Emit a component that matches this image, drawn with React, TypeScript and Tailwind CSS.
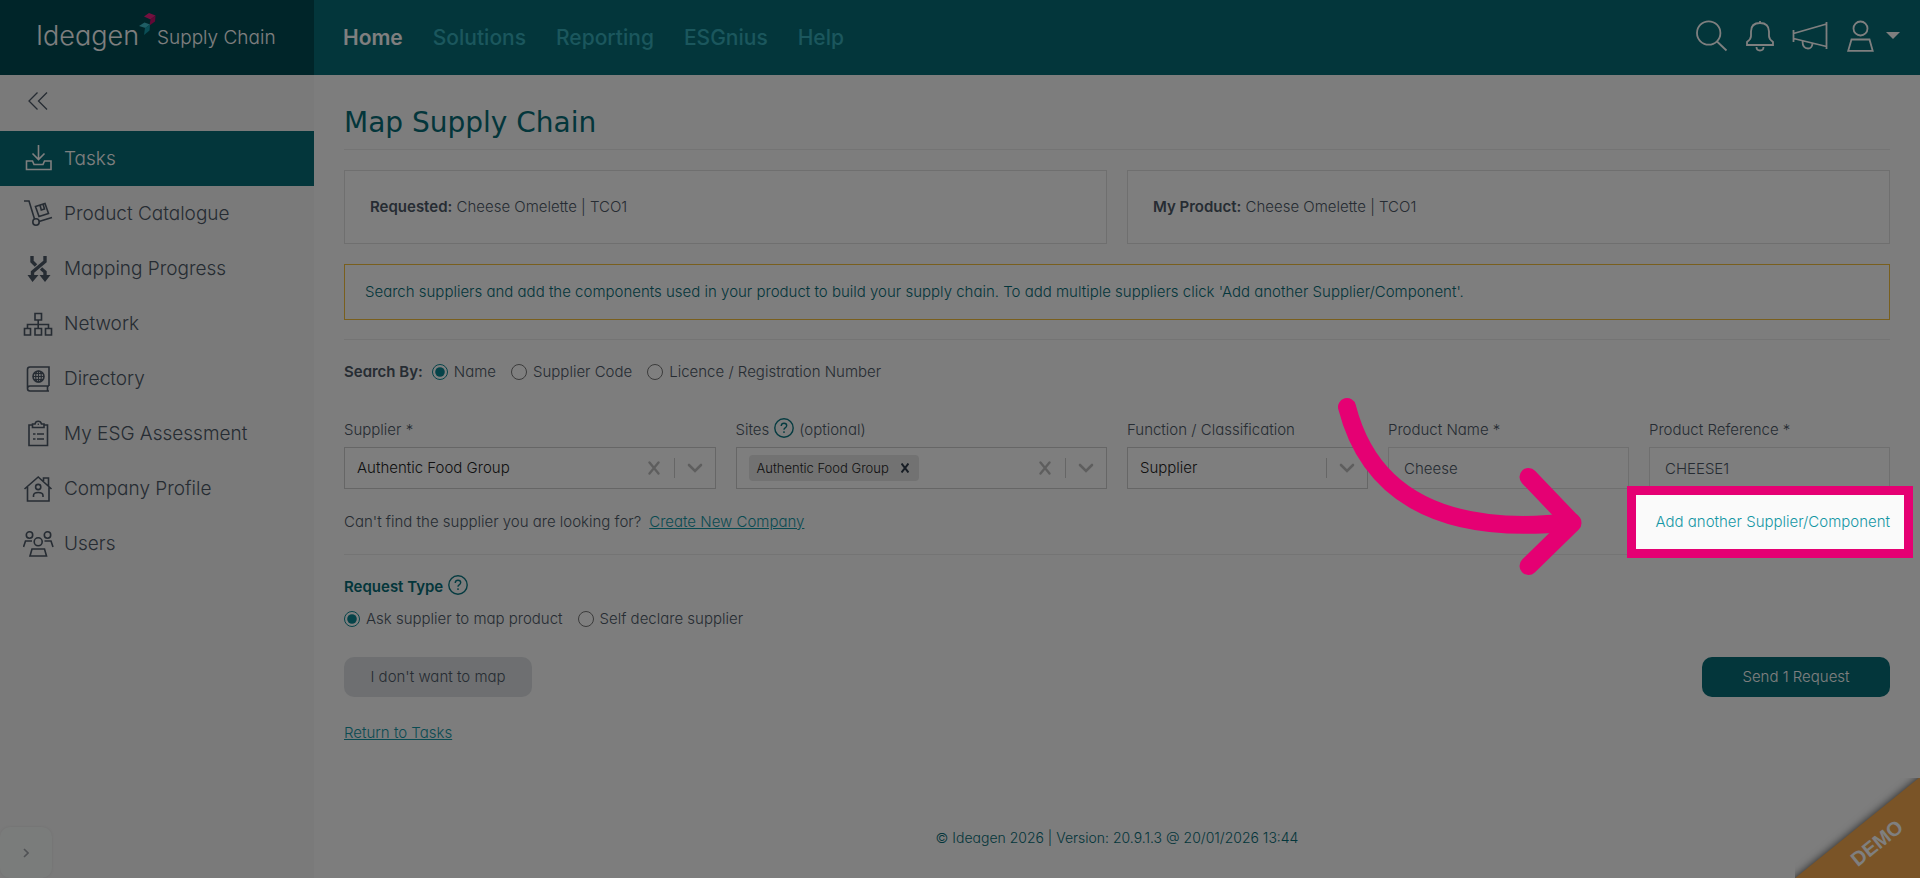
import { useState } from 'react'
import type { ReactNode } from 'react'

const svgProps = { fill: 'none', stroke: 'currentColor', strokeWidth: 1.6 }

const menuItems: { label: string; active?: boolean; icon: ReactNode }[] = [
  {
    label: 'Tasks',
    active: true,
    icon: <path d="M15.500 0v14M9.500 8.500l6 6 6-6M3.500 16H9.500l1.500 3.500h9l1.500-3.500h6.500v8.500h-24.500z" />,
  },
  {
    label: 'Product Catalogue',
    icon: (
      <>
        <path d="M1 1h5l5.500 18M16 21.500 29 17.500M12.500 6.500l9.500-3 3.500 10-9.500 3zM17 5l1.300 5 3.200-1-1.500-5" />
        <circle cx="13" cy="22" r="3.200" />
      </>
    ),
  },
  {
    label: 'Mapping Progress',
    icon: (
      <>
        <path strokeWidth={3.4} d="M9 1v5.500l4 4M22 1v5.500L9.500 17v4M18 13.500l4 3.500v4" />
        <path fill="currentColor" stroke="none" d="M4.500 20h11l-6 7zM16.500 20h11l-5.500 7z" />
      </>
    ),
  },
  {
    label: 'Network',
    icon: <path d="M12 3.500h6.500V10H12zM1.500 18.500h6V25h-6zM12 18.500h6.500V25H12zM22.500 18.500h6V25h-6zM15.200 10v8.500M4.500 18.500v-4h21v4" />,
  },
  {
    label: 'Directory',
    icon: (
      <>
        <path d="M26 21V2H7Q4.500 2 4.500 4.500v19Q4.500 26 7 26h19M4.500 23.500Q4.500 21 7 21h19M24.500 21v5" />
        <circle cx="15.500" cy="11.500" r="5.500" />
        <path strokeWidth={1.2} d="M10 11.500h11M15.500 6v11M11 8.500h9M11 14.500h9" />
        <ellipse strokeWidth={1.2} cx="15.500" cy="11.500" rx="2.800" ry="5.500" />
      </>
    ),
  },
  {
    label: 'My ESG Assessment',
    icon: (
      <>
        <path d="M9.500 5H6v20.500h18.500V5H21" />
        <path d="M9.500 4h2.500q.500-2.800 3.200-2.800T18.500 4H21v3.500H9.500z" />
        <path d="M10 14h2.500M14 14h7M10 19h2.500M14 19h7M14.700 4.200h1.200" />
      </>
    ),
  },
  {
    label: 'Company Profile',
    icon: (
      <>
        <path d="M1.500 14 15.200 2 28.500 14M4.500 12v14h21.500V12M20.500 6V3h5v8M10.500 22v-1.500q0-3 4.700-3t4.800 3V22" />
        <circle cx="15.200" cy="12" r="2.600" />
      </>
    ),
  },
  {
    label: 'Users',
    icon: (
      <>
        <circle cx="6.500" cy="5" r="3.200" />
        <circle cx="24.500" cy="5" r="3.200" />
        <circle cx="15.200" cy="11.800" r="4" />
        <path d="M9 19h12.500l2 7H7zM.500 17l2-6H9M30 17l-2-6h-6.500" />
      </>
    ),
  },
]

function Sidebar() {
  return (
    <aside className="w-[314px] shrink-0 bg-[#f4f4f4]">
      <button aria-label="Collapse menu" className="flex h-14 items-center pb-1 pl-7 text-[#4c5866]">
        <svg width="20" height="18" viewBox="0 0 20 18" {...svgProps} strokeWidth={1.3}>
          <path d="M9.500.500 1 9l8.500 8.500M19 .500 10.500 9l8.500 8.500" />
        </svg>
      </button>
      <nav>
        {menuItems.map((item) => (
          <a
            key={item.label}
            href="#"
            className={
              item.active
                ? 'flex h-[55px] items-center gap-2.5 bg-[#066c76] pl-[23px] text-[19px] font-light text-white'
                : 'flex h-[55px] items-center gap-2.5 pl-[23px] text-[19px] font-light text-[#4c5866]'
            }
          >
            <svg width="31" height="28" viewBox="0 0 31 28" {...svgProps}>
              {item.icon}
            </svg>
            {item.label}
          </a>
        ))}
      </nav>
    </aside>
  )
}

function Logo() {
  return (
    <a href="#" className="flex h-full w-[314px] shrink-0 items-center bg-[#004b53] pb-1 pl-9 text-white">
      <span className="text-[27px]">Ideagen</span>
      <svg width="18" height="26" viewBox="0 0 18 26" className="mb-5">
        <path fill="#e6217e" d="M5 3.500 10 0l6.500 2.500-5 4z" />
        <path fill="#c4106a" d="m16.500 2.500-.500 6-5.500 4 1-6z" />
        <path fill="#3fbccb" d="m0 13 5.500-3.500 5.500 2L6.500 15z" />
        <path fill="#149aaa" d="m11 11.500-.500 6-5.500 4.500 1-7z" />
      </svg>
      <span className="pt-1 text-[19px] font-light">Supply Chain</span>
    </a>
  )
}

function Header() {
  return (
    <header className="flex h-[75px] items-center bg-[#066c76]">
      <Logo />
      <nav className="flex gap-[30px] pl-[29px] text-[21px] font-medium text-[#36aebb]">
        <a href="#" className="font-semibold text-white">Home</a>
        <a href="#">Solutions</a>
        <a href="#">Reporting</a>
        <a href="#">ESGnius</a>
        <a href="#">Help</a>
      </nav>
      <div className="ml-auto flex gap-[18px] pr-5 pb-1 text-white">
        <button aria-label="Search">
          <svg width="32" height="32" viewBox="0 0 32 32" {...svgProps} strokeWidth={1.8}>
            <circle cx="12.700" cy="13" r="11.700" />
            <path d="m21 21.500 9.500 9" />
          </svg>
        </button>
        <button aria-label="Notifications">
          <svg width="28" height="32" viewBox="0 0 28 32" {...svgProps} strokeWidth={1.8}>
            <path d="M1 25v-3q4-3 4-6v-4.500q0-8.500 9-8.500t9 8.500V16q0 3 4 6v3zM14 1v2M10.500 27q0 3.500 3.500 3.500t3.500-3.500" />
          </svg>
        </button>
        <button aria-label="Announcements">
          <svg width="36" height="32" viewBox="0 0 36 32" {...svgProps} strokeWidth={1.8}>
            <path d="M1.500 10v12M34.500 2v27M1.500 13.500 34.500 4M1.500 18.500l33 8M10.500 21q0 7.500 5.500 7.500 4 0 4.500-5" />
          </svg>
        </button>
        <button aria-label="Account" className="flex items-center gap-3">
          <svg width="28" height="32" viewBox="0 0 28 32" {...svgProps} strokeWidth={1.8}>
            <circle cx="14.500" cy="8.500" r="7" />
            <path d="M5.500 19.500h18l3.200 11.300H2.200z" />
          </svg>
          <svg width="14" height="7" viewBox="0 0 14 7">
            <path fill="currentColor" d="M0 0h14L7 7z" />
          </svg>
        </button>
      </div>
    </header>
  )
}

function HelpIcon({ label }: { label: string }) {
  return (
    <button aria-label={label} className="self-start text-[#0b7782]">
      <svg width="20" height="20" viewBox="0 0 20 20" {...svgProps} strokeWidth={1.4}>
        <circle cx="10" cy="10" r="9.200" />
        <path d="M7.200 8q.200-2.700 2.800-2.700 2.700 0 2.700 2.300 0 1.400-1.500 2.200-1.200.700-1.200 2M10 13.200v1.800" />
      </svg>
    </button>
  )
}

function ClearButton({ label }: { label: string }) {
  return (
    <button aria-label={label} className="px-3.5 text-[#bdbdbd]">
      <svg width="12" height="14" viewBox="0 0 12 14" {...svgProps} strokeWidth={2.4} strokeLinecap="round">
        <path d="m1.500 1.500 9 11M10.500 1.500l-9 11" />
      </svg>
    </button>
  )
}

function Indicator() {
  return (
    <span className="pointer-events-none flex h-5 items-center border-l border-[#cccccc] px-3 text-[#bdbdbd]">
      <svg width="16" height="10" viewBox="0 0 16 10" {...svgProps} strokeWidth={2.6} strokeLinecap="round">
        <path d="m2 2 6 6 6-6" />
      </svg>
    </span>
  )
}

type RadioProps = { name: string; label: string; checked: boolean; onChange: () => void }

function Radio({ name, label, checked, onChange }: RadioProps) {
  return (
    <label className="flex items-center gap-1.5">
      <input type="radio" name={name} checked={checked} onChange={onChange} className="size-4 accent-[#0b8793]" />
      {label}
    </label>
  )
}

// Dims the whole page around the highlighted link and points an arrow at it
function Spotlight() {
  return (
    <div className="pointer-events-none absolute top-1/2 -right-[23px] z-50 h-[72px] w-[286px] -translate-y-1/2 border-[9px] border-[#e50073] shadow-[0_0_0_3000px_rgba(0,0,0,0.5)]">
      <svg
        width="252"
        height="184"
        viewBox="1335 394 252 184"
        className="absolute right-[317px] -bottom-[29px] max-w-none"
        fill="none"
        stroke="#e50073"
        strokeWidth="18"
        strokeLinecap="round"
        strokeLinejoin="round"
      >
        <path d="M1347 407C1367 485 1430 538 1572 522" />
        <path d="M1528.500 477 1572.500 523 1528.500 566" />
      </svg>
    </div>
  )
}

const searchOptions = ['Name', 'Supplier Code', 'Licence / Registration Number']
const requestOptions = ['Ask supplier to map product', 'Self declare supplier']

export default function App() {
  const [searchBy, setSearchBy] = useState(searchOptions[0])
  const [requestType, setRequestType] = useState(requestOptions[0])

  return (
    <div className="relative flex min-h-screen flex-col overflow-hidden bg-[#fafafa] font-[Inter,sans-serif] text-[15px] leading-6 font-light text-[#4c5866] [font-feature-settings:'cv11']">
      <Header />
      <div className="flex flex-1">
        <Sidebar />
        <main className="flex flex-1 flex-col px-[30px] pt-[26px]">
          <h1 className="border-b border-[#e8e8e8] pb-1 font-['DejaVu_Sans',sans-serif] text-[28px] leading-11 font-normal text-[#066c76]">
            Map Supply Chain
          </h1>

          <div className="mt-5 grid grid-cols-2 gap-5">
            <div className="border border-[#dedede] bg-[#fdfdfd] px-[25px] py-6">
              <strong className="font-semibold">Requested:</strong> Cheese Omelette | TCO1
            </div>
            <div className="border border-[#dedede] bg-[#fdfdfd] px-[25px] py-6">
              <strong className="font-semibold">My Product:</strong> Cheese Omelette | TCO1
            </div>
          </div>

          <p className="mt-5 border border-[#f2bf3a] bg-[#fdfdfd] px-5 py-[15px] text-[#066c76]">
            Search suppliers and add the components used in your product to build your supply chain. To add multiple
            suppliers click 'Add another Supplier/Component'.
          </p>

          <fieldset className="mt-[19px] flex gap-[15px] border-t border-[#e8e8e8] pt-5">
            <legend className="float-left -mr-1.5 font-semibold">Search By:</legend>
            {searchOptions.map((option) => (
              <Radio key={option} name="search-by" label={option} checked={searchBy === option} onChange={() => setSearchBy(option)} />
            ))}
          </fieldset>

          <div className="mt-[34px] grid grid-cols-12 gap-5">
            <div className="col-span-3">
              <label htmlFor="supplier">Supplier *</label>
              <div className="mt-[5px] flex h-[42px] items-center border border-[#cccccc] bg-[#fdfdfd]">
                <select id="supplier" className="h-full flex-1 appearance-none pl-3 text-[#222222]">
                  <option>Authentic Food Group</option>
                </select>
                <ClearButton label="Clear supplier" />
                <Indicator />
              </div>
            </div>
            <div className="col-span-3">
              <div className="flex h-6 gap-[5px]">
                <label htmlFor="sites">Sites</label>
                <HelpIcon label="About sites" />
                <span>(optional)</span>
              </div>
              <div className="mt-[5px] flex h-[42px] items-center border border-[#cccccc] bg-[#fdfdfd] pl-3">
                <span className="flex h-[26px] items-center gap-3 rounded-sm bg-[#e4e4e4] px-2 text-[13px] text-[#222222]">
                  Authentic Food Group
                  <button aria-label="Remove Authentic Food Group" className="pr-0.5 text-[#2f3b4a]">
                    <svg width="8" height="10" viewBox="0 0 8 10" {...svgProps} strokeWidth={2}>
                      <path d="m.500.500 7 9M7.500.500l-7 9" />
                    </svg>
                  </button>
                </span>
                <select id="sites" aria-label="Sites" className="h-full min-w-0 flex-1 appearance-none">
                  <option />
                </select>
                <ClearButton label="Clear sites" />
                <Indicator />
              </div>
            </div>
            <div className="col-span-2">
              <label htmlFor="function">Function / Classification</label>
              <div className="mt-[5px] flex h-[42px] items-center border border-[#cccccc] bg-[#fdfdfd]">
                <select id="function" className="h-full min-w-0 flex-1 appearance-none pl-3 text-[#222222]">
                  <option>Supplier</option>
                </select>
                <Indicator />
              </div>
            </div>
            <div className="col-span-2">
              <label htmlFor="product-name">Product Name *</label>
              <input id="product-name" defaultValue="Cheese" className="mt-[5px] block h-[42px] w-full border border-[#dedede] bg-[#fdfdfd] px-[15px]" />
            </div>
            <div className="col-span-2">
              <label htmlFor="product-reference">Product Reference *</label>
              <input id="product-reference" defaultValue="CHEESE1" className="mt-[5px] block h-[42px] w-full border border-[#dedede] bg-[#fdfdfd] px-[15px]" />
            </div>
          </div>

          <div className="mt-[21px] flex justify-between border-b border-[#e8e8e8] pb-5">
            <p>
              Can't find the supplier you are looking for?
              <a href="#" className="ml-2 text-[#1597a5] underline">Create New Company</a>
            </p>
            <div className="relative">
              <a href="#" className="text-[#1597a5]">Add another Supplier/Component</a>
              <Spotlight />
            </div>
          </div>

          <div className="mt-5 flex items-center gap-[5px]">
            <h2 className="font-semibold text-[#066c76]">Request Type</h2>
            <HelpIcon label="About request types" />
          </div>
          <div className="mt-2 flex gap-[15px]">
            {requestOptions.map((option) => (
              <Radio key={option} name="request-type" label={option} checked={requestType === option} onChange={() => setRequestType(option)} />
            ))}
          </div>

          <div className="mt-[26px] flex justify-between">
            <button className="h-10 w-[188px] rounded-[10px] bg-[#dcdfe2]">I don't want to map</button>
            <button className="h-10 w-[188px] rounded-[10px] bg-[#066c76] text-white">Send 1 Request</button>
          </div>
          <a href="#" className="mt-6 self-start text-[#1597a5] underline">Return to Tasks</a>

          <footer className="mt-auto pb-7 text-center text-sm leading-6 text-[#066c76]">
            © Ideagen 2026 | Version: 20.9.1.3 @ 20/01/2026 13:44
          </footer>
        </main>
      </div>

      <button aria-label="Expand panel" className="absolute bottom-0 left-0 flex h-[51px] w-[52px] items-center justify-center rounded-[10px] bg-[#f5f8f7] text-[#a0a5aa] shadow-[0_0_3px_rgba(0,0,0,0.08)]">
        <svg width="6" height="10" viewBox="0 0 6 10" {...svgProps}>
          <path d="m1 1 4 4-4 4" />
        </svg>
      </button>

      <div className="absolute right-0 bottom-0 h-[100px] w-[125px] overflow-hidden">
        <div className="absolute top-[50px] -left-[38px] h-[120px] w-[200px] origin-top -rotate-39 bg-[#f4a84e] pt-3 pl-3 text-center font-['Liberation_Sans',sans-serif] text-xl leading-6 font-bold text-white shadow-[0_0_8px_rgba(0,0,0,0.7)]">
          DEMO
        </div>
      </div>
    </div>
  )
}
